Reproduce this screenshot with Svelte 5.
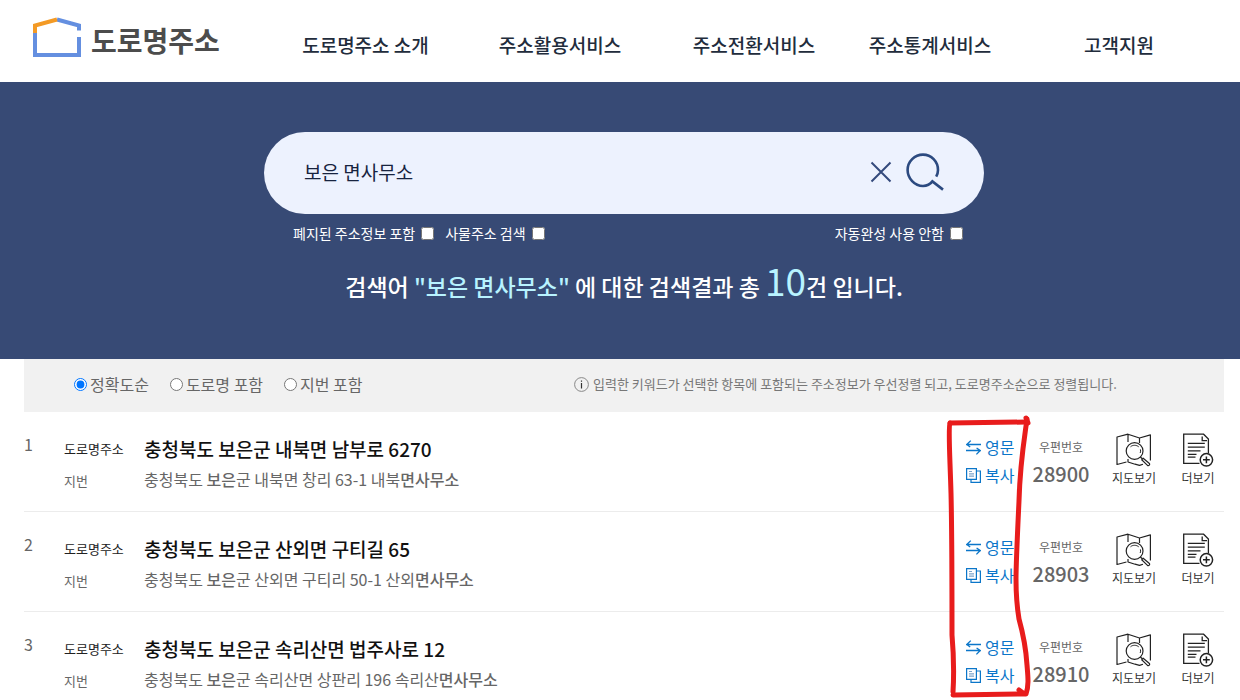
<!--
  Road name address search results
-->
<script lang="ts">
  interface Result {
    city: string;
    road: string;
    lot: string;
    match: string;
    zip: string;
  }

  const menu = ['도로명주소 소개', '주소활용서비스', '주소전환서비스', '주소통계서비스', '고객지원'];
  const sorts = ['정확도순', '도로명 포함', '지번 포함'];

  const results: Result[] = [
    { city: '충청북도', road: '보은군 내북면 남부로 6270', lot: '군 내북면 창리 63-1 내북', match: '면사무소', zip: '28900' },
    { city: '충청북도', road: '보은군 산외면 구티길 65', lot: '군 산외면 구티리 50-1 산외', match: '면사무소', zip: '28903' },
    { city: '충청북도', road: '보은군 속리산면 법주사로 12', lot: '군 속리산면 상판리 196 속리산', match: '면사무소', zip: '28910' }
  ];

  let keyword = $state('보은 면사무소');
  let sort = $state('정확도순');
</script>

<header class="header">
  <a class="logo" href="#home">
    <svg width="48" height="40" viewBox="0 0 48 40" fill="none" stroke-width="4" aria-hidden="true">
      <path d="M24 2.5L46 8.5V13.5M46 20V38H2V16" stroke="#648fe0" />
      <path d="M2 16V8.5L24 2.5" stroke="#f39a25" />
    </svg>
    <span>도로명주소</span>
  </a>
  <nav class="menu">
    {#each menu as item}
      <a href="#menu">{item}</a>
    {/each}
  </nav>
</header>

<section class="hero">
  <form class="search" onsubmit={(e) => e.preventDefault()}>
    <input class="keyword" type="text" aria-label="검색어" bind:value={keyword} />
    <button class="icon-btn" type="button" aria-label="지우기" onclick={() => (keyword = '')}>
      <svg width="22" height="22" viewBox="0 0 22 22" fill="none" stroke="#344a7c" stroke-width="2" aria-hidden="true">
        <path d="M1.5 1.5L20.5 20.5M20.5 1.5L1.5 20.5" />
      </svg>
    </button>
    <button class="icon-btn" type="submit" aria-label="검색">
      <svg width="38" height="38" viewBox="0 0 38 38" fill="none" stroke="#2c4a80" stroke-width="2.6" aria-hidden="true">
        <path d="M30.2 23.6C31.4 21.5 32 19.3 32 17C32 8.6 25.4 1.6 17 1.6S1.6 8.6 1.6 17S8.6 33 17 33C20.5 33 24 31.6 26.4 28.4L37 36.6" />
      </svg>
    </button>
  </form>
  <div class="options">
    <label>폐지된 주소정보 포함 <input type="checkbox" /></label>
    <label>사물주소 검색 <input type="checkbox" /></label>
    <label class="last">자동완성 사용 안함 <input type="checkbox" /></label>
  </div>
  <p class="summary">검색어 <em>"보은 면사무소"</em> 에 대한 검색결과 총 <em class="count">10</em>건 입니다.</p>
</section>

<main class="content">
  <div class="filter">
    <div class="sorts">
      {#each sorts as item}
        <label><input type="radio" name="sort" value={item} bind:group={sort} />{item}</label>
      {/each}
    </div>
    <p class="info">
      <svg width="15" height="15" viewBox="0 0 15 15" fill="none" aria-hidden="true">
        <circle cx="7.5" cy="7.5" r="6.9" stroke="#888" />
        <path d="M7.5 6V11.5M7.5 3.4V4.8" stroke="#333" stroke-width="1.2" />
      </svg>
      입력한 키워드가 선택한 항목에 포함되는 주소정보가 우선정렬 되고, 도로명주소순으로 정렬됩니다.
    </p>
  </div>

  <div class="results">
    {#each results as item, i}
      <article class="row">
        <span class="num">{i + 1}</span>
        <div class="labels">
          <span class="road-label">도로명주소</span>
          <span>지번</span>
        </div>
        <div class="address">
          <strong>{item.city} {item.road}</strong>
          <span>{item.city} <b>보은</b>{item.lot}<b>{item.match}</b></span>
        </div>
        <div class="actions">
          <button type="button">
            <svg width="15" height="15" viewBox="0 0 15 15" fill="none" stroke="#0b76c9" stroke-width="1.3" aria-hidden="true">
              <path d="M15 4.5H0.8L4.8 0.6M0.8 4.5L4.2 7M0 10.5H14.2L10.6 8M14.2 10.5L10.4 14.4" />
            </svg>
            영문
          </button>
          <button type="button">
            <svg width="15" height="15" viewBox="0 0 15 15" fill="none" stroke="#0b76c9" stroke-width="1.2" aria-hidden="true">
              <path d="M0.6 0.6H10.4V11.4H0.6ZM10.4 3H14.4V14.4H5V11.4" />
              <path d="M3 3.5H6M3 5.8H8M3 8.1H8" stroke="#7ba4cc" />
            </svg>
            복사
          </button>
        </div>
        <div class="zip">
          <span>우편번호</span>
          <strong>{item.zip}</strong>
        </div>
        <button class="tool" type="button">
          <svg width="36" height="34" viewBox="0 0 36 34" fill="none" stroke="#222" stroke-width="1.2" stroke-linejoin="round" aria-hidden="true">
            <path d="M10.5 29L1 31.5V4L12 1.2L23.5 5L34.4 1.8V27.5M12 1.2V9M23.5 5V10M12 26V29L19 31.2" />
            <path d="M19 31.2L23.5 32.4L27 31.2" />
            <circle cx="18.6" cy="18" r="8.4" fill="#fff" />
            <path d="M14.5 13.8C16.5 11.8 20.5 11.8 22.7 13.8M24.4 16.4C24.8 17.5 24.7 18.8 24.2 20" stroke-width="1" />
            <path d="M24.4 24L26.8 26.2" />
            <path d="M27.2 25.2L33.4 30.5C34.3 31.5 32.8 33.4 31.5 32.4L25.7 26.8Z" fill="#fff" />
          </svg>
          지도보기
        </button>
        <button class="tool more" type="button">
          <svg width="32" height="34" viewBox="0 0 32 34" fill="none" stroke="#222" stroke-width="1.3" aria-hidden="true">
            <path d="M17.5 30.4H1.7V1.2H21.6L26.4 6V20M20.2 3.4V7.6H25" />
            <path d="M5.8 10.4H22.8M5.8 14.2H22.8M5.8 17.8H18.5M5.8 21.4H14.5M5.8 24.2H13.5" />
            <circle cx="24.4" cy="26.8" r="6.2" fill="#fff" stroke-width="1.5" />
            <path d="M24.4 23.4V30.2M21 26.8H27.8" stroke-width="1.5" />
          </svg>
          더보기
        </button>
      </article>
    {/each}

    <!-- Hand-drawn marker around the action buttons -->
    <svg class="marker" width="88" height="288" viewBox="0 0 88 288" fill="none" stroke="#e81c1c" stroke-linecap="round" stroke-linejoin="round" aria-hidden="true">
      <path d="M6 10C4 14 6 44 7 80C8 120 8 180 8 222C10 245 10 262 9 279" stroke-width="5" />
      <path d="M6 10L82 9" stroke-width="5" />
      <path d="M83 6C80 28 76 50 75 88C73 130 72 156 72 166C72 180 73 194 75 206C80 224 82 236 83 252C84 264 85 272 82 281L75 281L9 282" stroke-width="5" />
      <path d="M82 5L84 10M75 277L79 280" stroke-width="5" />
    </svg>
  </div>
</main>

<style>
  :global(body) {
    margin: 0;
    background: #fff;
    color: #222;
    font-family: 'Noto Sans CJK KR', sans-serif;
  }

  a {
    color: inherit;
    text-decoration: none;
  }

  button {
    padding: 0;
    border: 0;
    background: none;
    color: inherit;
    font-family: inherit;
    cursor: pointer;
  }

  input[type='checkbox'],
  input[type='radio'] {
    width: 13px;
    height: 13px;
    flex-shrink: 0;
  }

  svg {
    flex-shrink: 0;
  }

  .header {
    display: grid;
    grid-template-columns: 235px 1fr;
    align-items: center;
    height: 82px;
    padding: 0 11px 0 33px;
  }

  .logo {
    display: flex;
    align-items: flex-start;
    gap: 10px;
    padding-bottom: 2px;
    color: #4c4c4c;
    font-size: 28px;
    font-weight: 700;
    line-height: 46px;
  }

  .menu {
    display: grid;
    grid-template-columns: 195fr 194fr 194fr 158fr 220fr;
    padding-top: 8px;
    color: #222c3c;
    font-size: 19px;
    font-weight: 500;
    line-height: 28px;
    text-align: center;
    white-space: nowrap;
  }

  .hero {
    display: flex;
    flex-direction: column;
    align-items: center;
    padding: 50px 16px 48px 24px;
    background: #374a75;
    color: #fff;
  }

  .search {
    display: flex;
    align-items: center;
    gap: 14px;
    box-sizing: border-box;
    width: 100%;
    max-width: 720px;
    height: 82px;
    padding: 0 40px 2px;
    border-radius: 41px;
    background: #edf2fe;
  }

  .keyword {
    flex: 1;
    min-width: 0;
    padding: 0;
    border: 0;
    outline: 0;
    background: none;
    color: #17233f;
    font-family: inherit;
    font-size: 19px;
    line-height: 28px;
  }

  .icon-btn {
    display: flex;
  }

  .options {
    display: flex;
    gap: 11px;
    box-sizing: border-box;
    width: 100%;
    max-width: 720px;
    padding: 8px 21px 0 29px;
    font-size: 14px;
    line-height: 22px;
  }

  .options label {
    display: flex;
    align-items: center;
    gap: 6px;
  }

  .options input {
    margin: 0;
  }

  .last {
    margin-left: auto;
  }

  .summary {
    margin: 11px 0 0;
    font-size: 23px;
    font-weight: 500;
    line-height: 50px;
  }

  .summary em {
    color: #b8f3ff;
    font-style: normal;
  }

  .summary .count {
    font-size: 37px;
    font-weight: 400;
  }

  .content {
    padding: 0 16px 0 24px;
  }

  .filter {
    display: grid;
    grid-template-columns: 11fr 13fr;
    align-items: center;
    box-sizing: border-box;
    height: 53px;
    padding-bottom: 3px;
    background: #f1f1f1;
    color: #666;
  }

  .sorts {
    display: flex;
    gap: 21px;
    padding-left: 50px;
    font-size: 16px;
    line-height: 24px;
  }

  .sorts label {
    display: flex;
    align-items: center;
    gap: 3px;
  }

  .sorts input {
    margin: 0;
  }

  .info {
    display: flex;
    align-items: center;
    gap: 4px;
    margin: 0;
    color: #777;
    font-size: 13px;
    line-height: 20px;
    white-space: nowrap;
  }

  .results {
    position: relative;
  }

  .row {
    display: grid;
    grid-template-columns: 40px 80px 1fr 60px 70px 76px 52px;
    align-items: start;
    padding: 21px 0 14px;
    border-bottom: 1px solid #ececec;
    color: #666;
  }

  .num {
    font-size: 16px;
    line-height: 22px;
  }

  .labels,
  .address {
    display: flex;
    flex-direction: column;
    line-height: 32px;
  }

  .labels {
    font-size: 13px;
  }

  .road-label {
    color: #222;
  }

  .address {
    font-size: 16px;
    line-height: 28px;
  }

  .address strong {
    color: #111;
    font-size: 19px;
    font-weight: 500;
    line-height: 32px;
  }

  .address b {
    font-weight: 500;
  }

  .actions {
    display: flex;
    flex-direction: column;
    color: #0b76c9;
  }

  .actions button {
    display: flex;
    align-items: center;
    gap: 4px;
    font-size: 16px;
    line-height: 28px;
  }

  .zip {
    display: flex;
    flex-direction: column;
    align-items: center;
    font-size: 12px;
    line-height: 28px;
  }

  .zip strong {
    font-size: 20px;
    font-weight: 500;
    line-height: 26px;
  }

  .tool {
    display: flex;
    flex-direction: column;
    align-items: center;
    color: #333;
    font-size: 12px;
    line-height: 22px;
  }

  .marker {
    position: absolute;
    top: 1px;
    right: 192px;
    pointer-events: none;
  }
</style>
